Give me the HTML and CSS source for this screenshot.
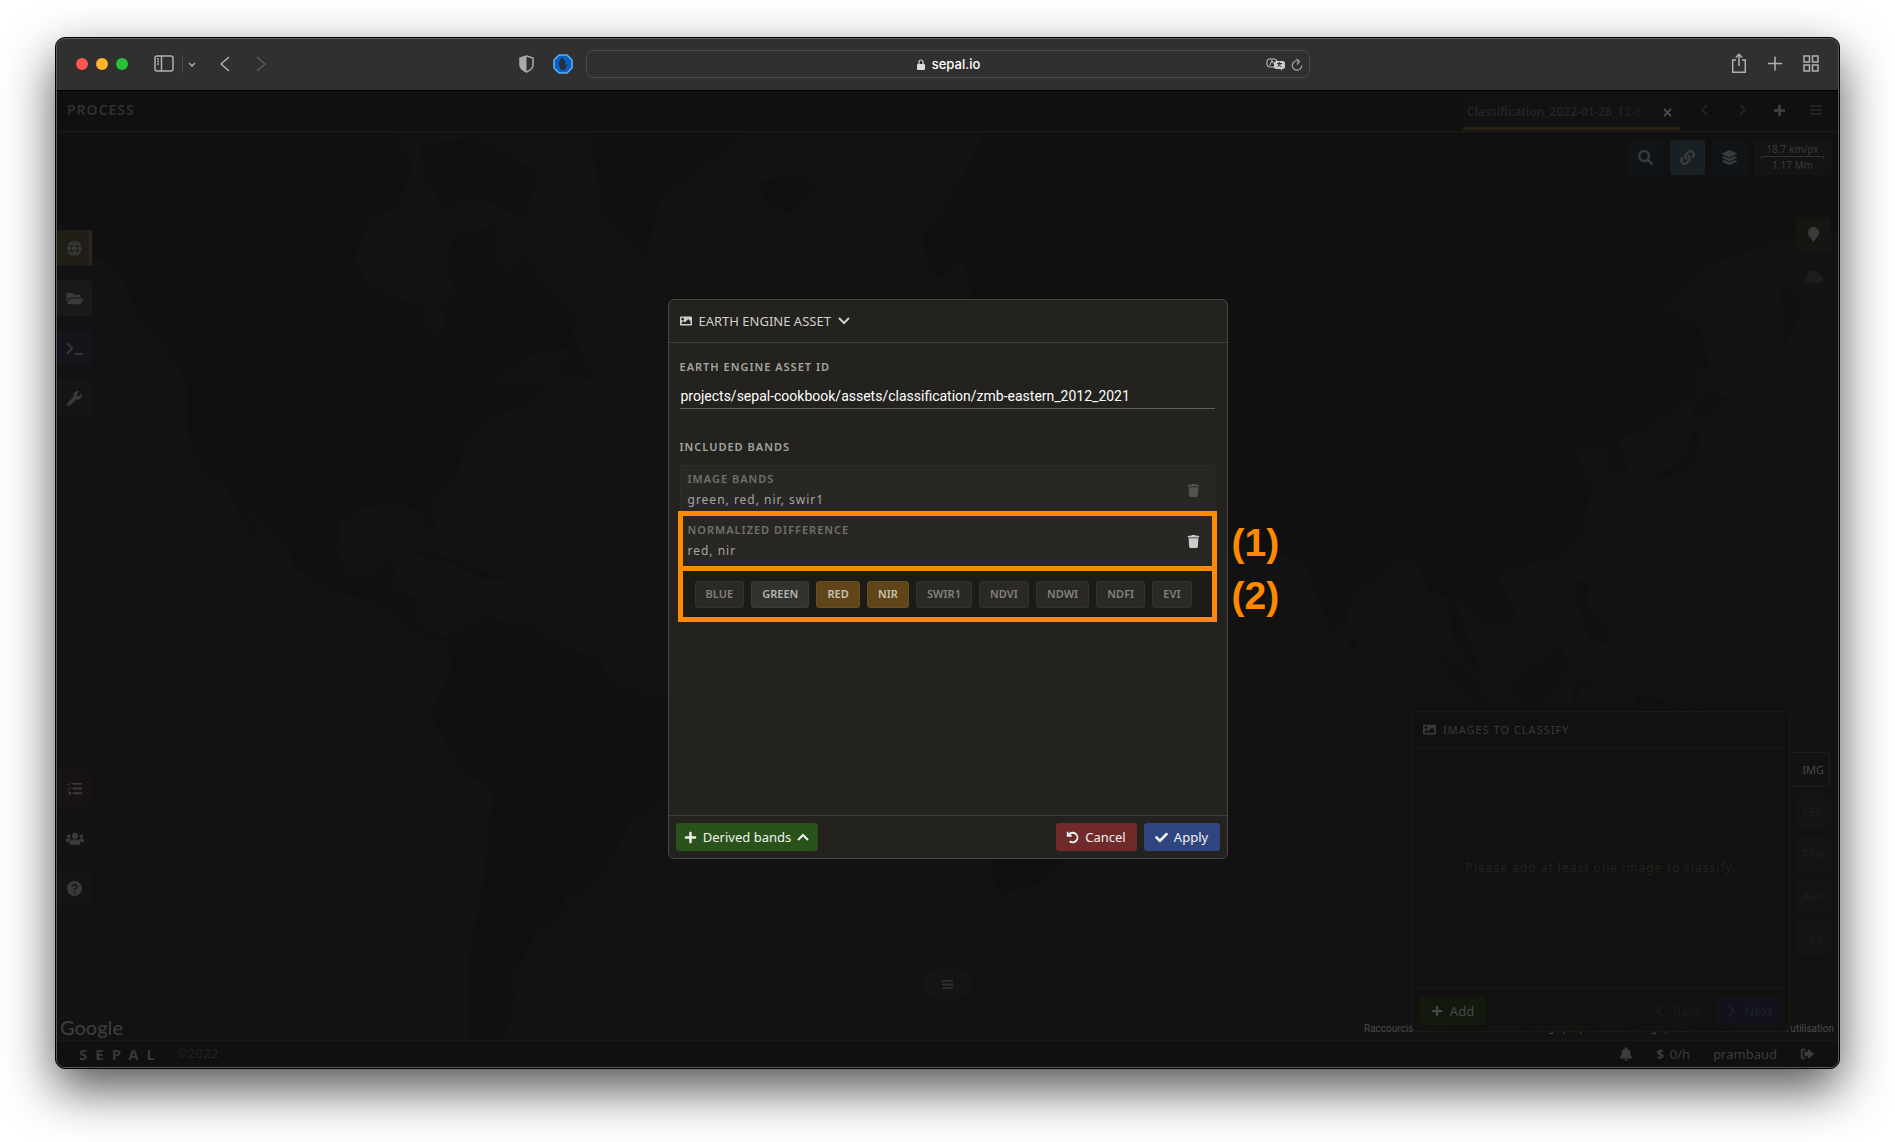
FILE: index.html
```html
<!DOCTYPE html>
<html lang="en">
<head>
<meta charset="utf-8">
<meta name="viewport" content="width=device-width, initial-scale=1">
<title>SEPAL</title>
<link rel="stylesheet" href="styles.css">
</head>
<body>
<svg class="sprite" aria-hidden="true">
  <symbol id="plus" viewBox="0 0 448 512"><path d="M416 208H272V64c0-17.67-14.33-32-32-32h-32c-17.67 0-32 14.33-32 32v144H32c-17.67 0-32 14.33-32 32v32c0 17.67 14.33 32 32 32h144v144c0 17.67 14.33 32 32 32h32c17.67 0 32-14.33 32-32V304h144c17.67 0 32-14.33 32-32v-32c0-17.67-14.33-32-32-32z"/></symbol>
  <symbol id="check" viewBox="0 0 512 512"><path d="M173.898 439.404l-166.4-166.4c-9.997-9.997-9.997-26.206 0-36.204l36.203-36.204c9.997-9.998 26.207-9.998 36.204 0L192 312.69 432.095 72.596c9.997-9.997 26.207-9.997 36.204 0l36.203 36.204c9.997 9.997 9.997 26.206 0 36.204l-294.4 294.401c-9.998 9.997-26.207 9.997-36.204-.001z"/></symbol>
  <symbol id="trash" viewBox="0 0 448 512"><path d="M432 32H312l-9.4-18.7A24 24 0 0 0 281.1 0H166.8a23.72 23.72 0 0 0-21.4 13.3L136 32H16A16 16 0 0 0 0 48v32a16 16 0 0 0 16 16h416a16 16 0 0 0 16-16V48a16 16 0 0 0-16-16zM53.2 467a48 48 0 0 0 47.9 45h245.8a48 48 0 0 0 47.9-45L416 128H32z"/></symbol>
  <symbol id="search" viewBox="0 0 512 512"><path d="M505 442.7L405.3 343c-4.5-4.5-10.6-7-17-7H372c27.6-35.3 44-79.7 44-128C416 93.1 322.9 0 208 0S0 93.1 0 208s93.1 208 208 208c48.3 0 92.7-16.4 128-44v16.3c0 6.4 2.5 12.5 7 17l99.7 99.7c9.4 9.4 24.6 9.4 33.9 0l28.3-28.3c9.4-9.4 9.4-24.6.1-34zM208 336c-70.7 0-128-57.2-128-128 0-70.7 57.2-128 128-128 70.7 0 128 57.2 128 128 0 70.7-57.2 128-128 128z"/></symbol>
  <symbol id="image" viewBox="0 0 512 512"><path d="M464 448H48c-26.51 0-48-21.49-48-48V112c0-26.51 21.49-48 48-48h416c26.51 0 48 21.49 48 48v288c0 26.51-21.49 48-48 48zM112 120c-30.928 0-56 25.072-56 56s25.072 56 56 56 56-25.072 56-56-25.072-56-56-56zM64 384h384V272l-87.515-87.515c-4.686-4.686-12.284-4.686-16.971 0L208 320l-55.515-55.515c-4.686-4.686-12.284-4.686-16.971 0L64 336v48z"/></symbol>
  <symbol id="layers" viewBox="0 0 512 512"><path d="M12.41 148.02l232.94 105.67c6.8 3.09 14.49 3.09 21.29 0l232.94-105.67c16.55-7.51 16.55-32.52 0-40.03L266.65 2.31a25.607 25.607 0 0 0-21.29 0L12.41 107.98c-16.55 7.51-16.55 32.53 0 40.04zm487.18 88.28l-58.09-26.33-161.64 73.27c-7.56 3.43-15.59 5.17-23.86 5.17s-16.29-1.74-23.86-5.17L70.51 209.97l-58.1 26.33c-16.55 7.5-16.55 32.5 0 40l232.94 105.59c6.8 3.08 14.49 3.08 21.29 0L499.59 276.3c16.55-7.5 16.55-32.5 0-40zm0 127.8l-57.87-26.23-161.86 73.37c-7.56 3.43-15.59 5.17-23.86 5.17s-16.29-1.74-23.86-5.17L70.29 337.87 12.41 364.1c-16.55 7.5-16.55 32.5 0 40l232.94 105.59c6.8 3.08 14.49 3.08 21.29 0L499.59 404.1c16.55-7.5 16.55-32.5 0-40z"/></symbol>
  <symbol id="folder" viewBox="0 0 576 512"><path d="M572.694 292.093L500.27 416.248A63.997 63.997 0 0 1 444.989 448H45.025c-18.523 0-30.064-20.093-20.731-36.093l72.424-124.155A64 64 0 0 1 152 256h399.964c18.523 0 30.064 20.093 20.73 36.093zM152 224h328v-48c0-26.51-21.49-48-48-48H272l-64-64H48C21.49 64 0 85.49 0 112v278.046l69.077-118.418C86.214 242.25 117.989 224 152 224z"/></symbol>
  <symbol id="bell" viewBox="0 0 448 512"><path d="M224 512c35.32 0 63.97-28.65 63.97-64H160.03c0 35.35 28.65 64 63.97 64zm215.39-149.71c-19.32-20.76-55.47-51.99-55.47-154.29 0-77.7-54.48-139.9-127.94-155.16V32c0-17.67-14.32-32-31.98-32s-31.98 14.33-31.98 32v20.84C118.56 68.1 64.08 130.3 64.08 208c0 102.3-36.15 133.53-55.47 154.29-6 6.45-8.66 14.16-8.61 21.71.11 16.4 12.98 32 32.1 32h383.8c19.12 0 32-15.6 32.1-32 .05-7.55-2.61-15.27-8.61-21.71z"/></symbol>
  <symbol id="wrench" viewBox="0 0 512 512"><path d="M507.73 109.1c-2.24-9.03-13.54-12.09-20.12-5.51l-74.36 74.36-67.88-11.31-11.31-67.88 74.36-74.36c6.62-6.62 3.43-17.9-5.66-20.16-47.38-11.74-99.55.91-136.58 37.93-39.64 39.64-50.55 97.1-34.05 147.2L18.74 402.76c-24.99 24.99-24.99 65.51 0 90.5 24.99 24.99 65.51 24.99 90.5 0l213.21-213.21c50.12 16.71 107.47 5.68 147.37-34.22 37.07-37.07 49.7-89.32 37.91-136.73zM64 472c-13.25 0-24-10.75-24-24 0-13.26 10.75-24 24-24s24 10.74 24 24c0 13.25-10.75 24-24 24z"/></symbol>
  <symbol id="bars" viewBox="0 0 12 12"><path d="M0 1h12v2H0zM0 5h12v2H0zM0 9h12v2H0z"/></symbol>
  <symbol id="left" viewBox="0 0 12 12"><path class="line" d="M8 1 3 6l5 5"/></symbol>
  <symbol id="right" viewBox="0 0 12 12"><path class="line" d="M4 1l5 5-5 5"/></symbol>
  <symbol id="down" viewBox="0 0 12 12"><path class="line" d="M1 3l5 5 5-5"/></symbol>
  <symbol id="up" viewBox="0 0 12 12"><path class="line" d="M1 9l5-5 5 5"/></symbol>
  <symbol id="undo" viewBox="0 0 16 16"><path d="M1 1v6h6V5H5a4.600 4.600 0 1 1 .4 6.600l-1.700 1.800A7 7 0 1 0 3 3.300V1z"/></symbol>
  <symbol id="link" viewBox="0 0 512 512"><path d="M326.612 185.391c59.747 59.809 58.927 155.698.36 214.59-.11.12-.24.25-.36.37l-67.2 67.2c-59.27 59.27-155.699 59.262-214.96 0-59.27-59.26-59.27-155.7 0-214.96l37.106-37.106c9.84-9.84 26.786-3.3 27.294 10.606.648 17.722 3.826 35.527 9.69 52.721 1.986 5.822.567 12.262-3.783 16.612l-13.087 13.087c-28.026 28.026-28.905 73.66-1.155 101.96 28.024 28.579 74.086 28.749 102.325.51l67.2-67.19c28.191-28.191 28.073-73.757 0-101.83-3.701-3.694-7.429-6.564-10.341-8.569a16.037 16.037 0 0 1-6.947-12.606c-.396-10.567 3.348-21.456 11.698-29.806l21.054-21.055c5.521-5.521 14.182-6.199 20.584-1.731a152.482 152.482 0 0 1 20.522 17.197zM467.547 44.449c-59.261-59.262-155.690-59.270-214.960 0l-67.200 67.200c-.120.120-.250.250-.360.370-58.566 58.892-59.387 154.781.360 214.590a152.454 152.454 0 0 0 20.521 17.196c6.402 4.468 15.064 3.789 20.584-1.731l21.054-21.055c8.350-8.350 12.094-19.239 11.698-29.806a16.037 16.037 0 0 0-6.947-12.606c-2.912-2.005-6.640-4.875-10.341-8.569-28.073-28.073-28.191-73.639 0-101.830l67.200-67.190c28.239-28.239 74.300-28.069 102.325.510 27.750 28.300 26.872 73.934-1.155 101.960l-13.087 13.087c-4.350 4.350-5.769 10.790-3.783 16.612 5.864 17.194 9.042 34.999 9.690 52.721.509 13.906 17.454 20.446 27.294 10.606l37.106-37.106c59.271-59.259 59.271-155.699.001-214.959z"/></symbol>
  <symbol id="globe" viewBox="0 0 16 16"><circle cx="8" cy="8" r="8"/><path class="cut" d="M0 5.500h16M0 10.500h16M8 0C3.500 3 3.500 13 8 16M8 0c4.500 3 4.500 13 0 16"/></symbol>
  <symbol id="terminal" viewBox="0 0 20 16"><path class="line" d="M1 2l6 6-6 6M10 14h9"/></symbol>
  <symbol id="tasks" viewBox="0 0 16 16"><path d="M6 2h10v2H6zM6 7h10v2H6zM6 12h10v2H6zM1.500 11.500h3v3h-3z"/><path class="thin" d="M0 3l1.500 1.500L4.500 1M0 8l1.500 1.500L4.500 6"/></symbol>
  <symbol id="users" viewBox="0 0 20 16"><circle cx="10" cy="5" r="3.500"/><circle cx="3" cy="5.500" r="2"/><circle cx="17" cy="5.500" r="2"/><path d="M4 15v-2a4 4 0 0 1 4-4h4a4 4 0 0 1 4 4v2zM0 12v-2a2 2 0 0 1 2-2h2.500l1 1A5 5 0 0 0 3.500 12zM20 12v-2a2 2 0 0 0-2-2h-2.500l-1 1a5 5 0 0 1 2 3z"/></symbol>
  <symbol id="help" viewBox="0 0 16 16"><circle cx="8" cy="8" r="8"/><path class="cut wide" d="M5.500 6.200C6 3.200 10.500 3.500 10.500 6c0 1.700-2.500 1.700-2.500 3.600M8 11v2"/></symbol>
  <symbol id="pin" viewBox="0 0 12 16"><path d="M6 0a6 6 0 0 0-6 6c0 3 3 5 6 10 3-5 6-7 6-10a6 6 0 0 0-6-6z"/></symbol>
  <symbol id="cloud" viewBox="0 0 20 14"><path d="M4.500 14A4.500 4.500 0 0 1 3 5.300 5.500 5.500 0 0 1 13 2.500 4 4 0 0 1 17 6a4 4 0 0 1-1 8z"/><path class="cut wide" d="M9.500 4v6M6.500 8l3 3 3-3"/></symbol>
  <symbol id="logout" viewBox="0 0 16 14"><path d="M6 1v2H3.500Q3 3 3 4v6q0 1 .5 1H6v2H3Q1 13 1 11V3Q1 1 3 1zM9 1l7 6-7 6V9.500H5v-5h4z"/></symbol>
</svg>

<div class="window">
  <header class="toolbar">
    <div class="bar-left">
      <div class="lights"><i class="red"></i><i class="amber"></i><i class="green"></i></div>
      <svg class="sidebar-icon" width="20" height="17" viewBox="0 0 20 17"><rect x="1" y="1" width="18" height="15" rx="2"/><path d="M7.500 1v15M3 4h2M3 6.500h2M3 9h2"/></svg>
      <svg class="split" width="15" height="18" viewBox="0 0 15 18"><path class="rule" d="M.5 0v18"/><path d="M7 8l3 3 3-3"/></svg>
      <svg class="nav-arrow" width="10" height="16" viewBox="0 0 10 16"><path d="M9 1 1 8l8 7"/></svg>
      <svg class="nav-arrow off" width="10" height="16" viewBox="0 0 10 16"><path d="M1 1l8 7-8 7"/></svg>
    </div>
    <div class="bar-center">
      <svg width="15" height="18" viewBox="0 0 15 18"><path d="M7.500 1 14 3v7c0 3-3 5.500-6.500 7C4 15.500 1 13 1 10V3z" fill="none" stroke="#a9a9a9" stroke-width="1.500"/><path d="M7.500 1v16C4 15.500 1 13 1 10V3z" fill="#a9a9a9"/></svg>
      <svg class="stop" width="20" height="20" viewBox="0 0 20 20"><path d="M6 1h8l5 5v8l-5 5H6l-5-5V6z" fill="#0a5fc4" stroke="#5ab4f5" stroke-width="1.500"/><path d="M6 11V7.500h1V10V5h1.300v4V4h1.300v5V4.500h1.300V10V6h1.200v6l1.400-2 1 .5-2.500 5.500H8z" fill="#2b3038"/></svg>
      <div class="address">
        <svg width="8" height="11" viewBox="0 0 8 11"><rect y="5" width="8" height="6" rx="1" fill="#ddd"/><path d="M2 5V3a2 2 0 0 1 4 0v2" fill="none" stroke="#ddd" stroke-width="1.200"/></svg>
        <span>sepal.io</span>
        <div class="page-actions">
          <svg width="20" height="13" viewBox="0 0 20 13"><rect x="1" y="1" width="10" height="8" rx="2.500" fill="none" stroke="#ccc"/><path d="M3.500 7.500 6 2.500l1.500 3" fill="none" stroke="#ccc"/><rect x="8" y="3" width="11" height="8" rx="2.500" fill="#ccc"/><path d="M14 10l2 3v-3z" fill="#ccc"/><path d="M11 5.500h5M13.500 4v1.500M11.500 9l3.500-3.500M12 6l3.500 3" stroke="#333" fill="none"/></svg>
          <svg width="12" height="13" viewBox="0 0 12 13"><path d="M8.500 3.500A4.700 4.700 0 1 0 10.700 7.500M5.500 1l3 2.500-2.500 3" fill="none" stroke="#a5a5a5" stroke-width="1.200"/></svg>
        </div>
      </div>
    </div>
    <div class="bar-right">
      <svg width="16" height="21" viewBox="0 0 16 21"><path d="M5 7H1.700v12.300h12.600V7H11M8 13V1.500M4.800 4.500 8 1.300l3.200 3.200"/></svg>
      <svg width="14" height="15" viewBox="0 0 14 15"><path d="M7 .5v14M0 7.500h14"/></svg>
      <svg width="16" height="17" viewBox="0 0 16 17"><path d="M1 1h5.500v6H1zM9.500 1H15v6H9.500zM1 10h5.500v6H1zM9.500 10H15v6H9.500z"/></svg>
    </div>
  </header>

  <div class="app">
    <header class="process">
      <h1>PROCESS</h1>
      <div class="tab"><span>Classification_2022-01-28_12-5</span><button aria-label="Close tab"><svg width="9" height="9" viewBox="0 0 10 10"><path d="M1 1l8 8M9 1L1 9"/></svg></button></div>
      <div class="tab-tools">
        <button class="faint" aria-label="Previous"><svg class="i12"><use href="#left"/></svg></button>
        <button class="faint" aria-label="Next"><svg class="i12"><use href="#right"/></svg></button>
        <button class="bright" aria-label="Add"><svg class="i13"><use href="#plus"/></svg></button>
        <button class="faint" aria-label="Menu"><svg class="i12"><use href="#bars"/></svg></button>
      </div>
    </header>

    <main class="stage">
      <svg class="map" viewBox="0 0 1781 908" preserveAspectRatio="none" aria-hidden="true">
        <g transform="scale(.395 .582)">
          <path d="M0 0H850L900 60 860 130 790 150 750 220 790 265 920 300 940 345 965 362 985 330 975 300 1010 270 990 240 1000 180 1110 160 1115 220 1150 240 1185 210 1230 265 1310 320 1300 370 1190 385 1100 430 1250 430 1170 475 1100 490 1030 540 1015 585 945 630 962 690 940 690 920 650 860 640 770 645 715 670 710 720 735 760 800 765 820 740 860 740 845 790 910 800 910 850 985 870 1090 835 1200 850 1290 890 1370 900 1395 945 1548 980V1140L1450 1190 1400 1250 1340 1310 1280 1310 1295 1340 1210 1380 1180 1420 1140 1450 1160 1485 1130 1568H1040V1430L1080 1290 1105 1130 1030 1100 945 1000 1000 920 990 875 940 870 880 850 860 825 780 800 720 795 600 750 590 720 460 630 530 715 470 670 430 610 370 580 330 520V430L270 370 200 310 160 240 100 215 0 200z"/>
          <path d="M1350 0 1380 140 1490 212 1530 110 1600 80 1750 0zM900 725 940 718 1080 755 1160 770 1080 768 1000 740zM920 20 1060 10 1220 70 1180 150 1060 110 980 130 930 80zM1265 415 1310 355 1355 425z"/>
        </g>
        <g transform="translate(603) scale(.383 .582)">
          <path d="M850 0 760 110 685 180 700 240 740 250 790 215 820 290H1568V0zM260 85 370 75 405 100 340 140 275 120zM865 1240 880 1310 1000 1290 1075 1240z"/>
        </g>
        <g transform="translate(1163) scale(.395 .582)">
          <path d="M-50 0H1568V170L1440 180 1230 230 1120 305 1210 330 1205 450 1100 500 1010 530 1035 590 990 585 980 550 890 540 940 610 920 680 860 730 740 750 700 760 750 830 700 855 590 800 665 935 590 880 580 800 530 790 490 730 440 740 330 800 320 840 285 865 215 740 140 720-50 700z"/>
          <path d="M1210 320 1240 410 1215 415zM1190 490 1220 450 1300 455 1220 490zM1200 505 1215 530 1195 580 1060 605 1120 585 1180 560zM740 940 860 885 880 910 850 960 800 985 750 975zM545 900 620 920 700 1000 650 990zM900 770 935 775 925 810 980 850 990 880 940 875 905 810zM320 860 350 880 330 892zM890 950 950 940 910 960 900 995zM1050 965 1270 1000H1050zM1420 260 1480 290 1430 365z"/>
        </g>
      </svg>

      <nav class="side" aria-label="Sections">
        <div>
          <button class="globe" aria-label="Process"><svg class="i15"><use href="#globe"/></svg></button>
          <button class="folder" aria-label="Files"><svg class="i18"><use href="#folder"/></svg></button>
          <button class="terminal" aria-label="Terminal"><svg class="i18"><use href="#terminal"/></svg></button>
          <button class="wrench" aria-label="Apps"><svg class="i15"><use href="#wrench"/></svg></button>
        </div>
        <div>
          <button class="tasks" aria-label="Tasks"><svg class="i15"><use href="#tasks"/></svg></button>
          <button class="users" aria-label="Users"><svg class="i18"><use href="#users"/></svg></button>
          <button class="help" aria-label="Help"><svg class="i15"><use href="#help"/></svg></button>
        </div>
      </nav>

      <div class="tools">
        <div class="tool-row">
          <button class="blue" aria-label="Search"><svg class="i15"><use href="#search"/></svg></button>
          <button class="blue on" aria-label="Link"><svg class="i15"><use href="#link"/></svg></button>
          <button class="blue" aria-label="Layers"><svg class="i15"><use href="#layers"/></svg></button>
          <div class="scale"><span>18.7 km/px</span><i></i><span>1.17 Mm</span></div>
        </div>
        <button class="olive" aria-label="Marker"><svg class="i15"><use href="#pin"/></svg></button>
        <button class="olive dim" aria-label="Retrieve"><svg class="i18"><use href="#cloud"/></svg></button>
      </div>

      <div class="google">Google</div>
      <div class="attribution"><span>Raccourcis clavier</span><span>Données cartographiques ©2022 Google, INEGI</span><span>Conditions d'utilisation</span></div>
      <button class="pill" aria-label="Expand"><svg class="i11"><use href="#bars"/></svg></button>

      <section class="classify">
        <div class="card">
          <h2><svg class="i13"><use href="#image"/></svg>IMAGES TO CLASSIFY</h2>
          <p>Please add at least one image to classify.</p>
          <footer>
            <button class="add"><svg class="i12"><use href="#plus"/></svg>Add</button>
            <button class="back"><svg class="i12"><use href="#left"/></svg>Back</button>
            <button class="next"><svg class="i12"><use href="#right"/></svg>Next</button>
          </footer>
        </div>
        <div class="steps">
          <button class="current">IMG</button><button>LEG</button><button>TRN</button><button>AUX</button><button>CLS</button>
        </div>
      </section>
    </main>

    <footer class="status">
      <strong>SEPAL</strong><span class="year">©2022</span>
      <div class="account">
        <svg class="i14"><use href="#bell"/></svg>
        <span class="budget"><b>$</b>0/h</span>
        <span>prambaud</span>
        <svg class="i14"><use href="#logout"/></svg>
      </div>
    </footer>

    <div class="overlay">
      <form class="modal">
        <h2><svg class="i12"><use href="#image"/></svg>EARTH ENGINE ASSET<svg class="i12"><use href="#down"/></svg></h2>
        <div class="body">
          <label class="caption" for="asset">EARTH ENGINE ASSET ID</label>
          <input id="asset" type="text" value="projects/sepal-cookbook/assets/classification/zmb-eastern_2012_2021">
          <div class="caption included">INCLUDED BANDS</div>
          <div class="band">
            <div><h3>IMAGE BANDS</h3><p>green, red, nir, swir1</p></div>
            <button type="button" class="trash off" aria-label="Remove image bands"><svg class="i13"><use href="#trash"/></svg></button>
          </div>
          <div class="band">
            <div><h3>NORMALIZED DIFFERENCE</h3><p>red, nir</p></div>
            <button type="button" class="trash" aria-label="Remove normalized difference"><svg class="i13"><use href="#trash"/></svg></button>
            <div class="mark"><span>(1)</span></div>
          </div>
          <div class="chips">
            <button type="button">BLUE</button><button type="button" class="light">GREEN</button><button type="button" class="picked">RED</button><button type="button" class="picked">NIR</button><button type="button">SWIR1</button><button type="button">NDVI</button><button type="button">NDWI</button><button type="button">NDFI</button><button type="button">EVI</button>
            <div class="mark"><span>(2)</span></div>
          </div>
        </div>
        <footer>
          <button type="button" class="derived"><svg class="i13"><use href="#plus"/></svg>Derived bands<svg class="i12"><use href="#up"/></svg></button>
          <button type="button" class="cancel"><svg class="i13"><use href="#undo"/></svg>Cancel</button>
          <button type="button" class="apply"><svg class="i13"><use href="#check"/></svg>Apply</button>
        </footer>
      </form>
    </div>
  </div>
</div>
</body>
</html>
```
FILE: styles.css
```css
* { box-sizing: border-box; }
body {
  margin: 0;
  min-height: 100vh;
  padding: 37px 55px 73px;
  display: flex;
  background: #fff;
  color: #ccc;
  font: 13px/18px "Noto Sans", "Open Sans", sans-serif;
}
h1, h2, h3, p { margin: 0; font-size: inherit; font-weight: 400; }
button { border: 0; padding: 0; background: none; color: inherit; font: inherit; display: flex; align-items: center; justify-content: center; }
svg { display: block; flex: none; fill: currentColor; }
.sprite { position: absolute; width: 0; height: 0; }
.line { fill: none; stroke: currentColor; stroke-width: 2; }
.thin { fill: none; stroke: currentColor; stroke-width: 1; }
.cut { fill: none; stroke: #1c1b17; stroke-width: 1; }
.wide { stroke-width: 2; }
.i11 { width: 11px; height: 11px; }
.i12 { width: 12px; height: 12px; }
.i13 { width: 13px; height: 13px; }
.i14 { width: 14px; height: 14px; }
.i15 { width: 15px; height: 15px; }
.i18 { width: 18px; height: 15px; }

/* Browser window */
.window {
  flex: 1;
  min-width: 0;
  display: flex;
  flex-direction: column;
  border: 1px solid #000;
  border-radius: 10px;
  overflow: clip;
  outline: 1px solid #5a5a5a;
  outline-offset: -2px;
  padding: 1px;
  background: #111;
  box-shadow: 0 20px 50px rgba(0, 0, 0, .68);
}
.toolbar {
  height: 52px;
  display: grid;
  grid-template-columns: 1fr auto 1fr;
  align-items: center;
  padding-bottom: 2px;
  background: #303030;
  border-bottom: 1px solid #000;
  border-radius: 8px 8px 0 0;
}
.toolbar svg { fill: none; }
.bar-left { display: flex; align-items: center; padding-left: 19px; color: #b0b0b0; }
.bar-left svg, .bar-right svg { stroke: #b0b0b0; stroke-width: 1.5; }
.lights { display: flex; gap: 8px; }
.lights i { width: 12px; height: 12px; border-radius: 50%; }
.red { background: #ff5650; }
.amber { background: #ffb429; }
.green { background: #28c138; }
.sidebar-icon { margin-left: 26px; }
.split { margin: 0 23px 0 8px; }
.bar-left .rule { stroke: #484848; stroke-width: 1; }
.nav-arrow { margin-right: 26px; }
.bar-left .off { stroke: #5b5b5b; }
.bar-center { display: flex; align-items: center; gap: 19px; margin-right: 66px; }
.stop { margin-right: -6px; }
.address {
  width: 724px;
  height: 28px;
  border: 1px solid #4a4a4a;
  border-radius: 7px;
  padding: 1px 6px 0 22px;
  display: grid;
  grid-template-columns: 1fr auto 1fr;
  align-items: center;
  column-gap: 7px;
  color: #fff;
  font: 500 13px/18px Inter, sans-serif;
}
.address > svg { justify-self: end; }
.page-actions { display: flex; justify-content: flex-end; gap: 5px; }
.bar-right { display: flex; align-items: center; justify-content: flex-end; gap: 21px; padding-right: 19px; }

/* Application */
.app { position: relative; flex: 1; display: flex; flex-direction: column; background: #101010; border-radius: 0 0 8px 8px; overflow: clip; }
.process { height: 41px; display: flex; align-items: center; border-bottom: 1px solid #1b1b1b; padding-left: 10px; }
.process h1 { flex: 1; padding-bottom: 2px; font-size: 14px; font-weight: 600; color: #303030; letter-spacing: 1px; }
.tab {
  width: 217px;
  height: 33px;
  align-self: flex-end;
  display: flex;
  align-items: center;
  justify-content: space-between;
  padding: 0 8px 0 4px;
  margin-bottom: 1px;
  background: #121212;
  border-bottom: 3px solid #2b2112;
  border-radius: 4px 4px 0 0;
  font-size: 12px;
  font-weight: 600;
  color: #242424;
}
.tab span { flex: 1; white-space: nowrap; mask-image: linear-gradient(90deg, #000 75%, transparent); }
.tab svg { stroke: #505050; stroke-width: 2; }
.tab-tools { display: flex; gap: 13px; padding: 0 10px 2px 13px; color: #444; }
.tab-tools button { width: 24px; height: 24px; }
.tab-tools .faint { color: #232323; }

.stage { flex: 1; display: grid; grid-template: minmax(0, 1fr) / minmax(0, 1fr); background: #121212; color: #3a3a3a; }
.stage > * { grid-area: 1 / 1; }
.map { width: 100%; height: 100%; fill: #101010; }
.side { justify-self: start; display: flex; flex-direction: column; justify-content: space-between; padding: 98px 0 134px; }
.side div { display: grid; gap: 14px; }
.side button { width: 35px; height: 36px; border-radius: 0 3px 3px 0; }
.side .globe { background: #211e17; box-shadow: inset -3px 0 #2b261c; }
.side .folder { background: #191919; }
.side .terminal { background: #13151a; }
.side .wrench { background: #171417; }
.side .tasks { background: #171312; }
.side .users { background: #121412; }
.side .help { background: #141412; }

.tools { place-self: start end; display: flex; flex-direction: column; align-items: flex-end; gap: 7px; padding: 8px 7px; }
.tool-row { display: flex; gap: 7px; margin-bottom: 35px; }
.tools button { width: 35px; height: 35px; border-radius: 2px; }
.blue { background: #111416; }
.blue.on { background: #182024; }
.olive { background: #161512; }
.olive.dim { background: #131312; color: #1e1e1e; }
.scale { width: 77px; height: 35px; background: #141413; border-radius: 2px; display: grid; justify-items: center; align-content: center; font-size: 10px; line-height: 13px; }
.scale i { width: 63px; height: 3px; border: 1px solid #333; border-bottom: 0; }

.google { place-self: end start; padding-left: 3px; color: #3c3c3c; font: 500 20px/26px Lato, sans-serif; }
.attribution { place-self: end; width: 474px; padding-right: 4px; display: flex; justify-content: space-between; font: 10px/23px Roboto, sans-serif; color: #4a4a4a; white-space: nowrap; }
.pill { place-self: end center; width: 51px; height: 28px; margin-bottom: 42px; border-radius: 14px; background: #141412; color: #303030; }

.classify { place-self: end; display: flex; margin: 0 8px 8px 0; }
.card { width: 378px; height: 321px; display: flex; flex-direction: column; background: rgba(18, 18, 16, .95); border: 1px solid #1a1a18; border-radius: 6px; }
.card h2 { height: 36px; display: flex; align-items: center; gap: 7px; padding-left: 10px; border-bottom: 1px solid #1a1a18; font-size: 11px; letter-spacing: 1px; }
.card p { flex: 1; display: grid; place-items: center; color: #222220; letter-spacing: 1px; font-size: 12px; }
.card footer { height: 43px; display: flex; align-items: flex-start; gap: 6px; padding: 8px 7px; border-top: 1px solid #1a1a18; }
.card button { height: 28px; gap: 7px; border-radius: 3px; font-size: 13px; }
.add { width: 65px; background: #121a10; color: #484848; }
.back { width: 65px; margin-left: auto; color: #1b1b1a; }
.next { width: 66px; background: #12131a; color: #1e2026; }
.steps { display: grid; align-content: start; gap: 7px; padding-top: 41px; }
.steps button { width: 34px; height: 35px; margin-left: 6px; background: #141412; border-radius: 2px; color: #1e1e1d; font-size: 11px; }
.steps .current { width: 40px; margin-left: 0; padding-right: 5px; justify-content: flex-end; background: #121210; border: 1px solid #1c1c1b; border-left: 0; color: #484848; }

.status { height: 27px; display: flex; align-items: center; border-top: 1px solid #171717; padding: 0 24px 0 22px; color: #3c3c3c; font-size: 13px; }
.status strong { font-size: 15px; letter-spacing: 8px; color: #383838; }
.year { margin-left: 14px; color: #242424; font-size: 12px; letter-spacing: 1px; }
.account { margin-left: auto; display: flex; align-items: center; gap: 23px; }
.budget { display: flex; gap: 6px; }

/* Asset dialog */
.overlay { position: absolute; inset: 0; display: grid; place-items: center; }
.modal { width: 560px; height: 560px; display: flex; flex-direction: column; background: #23221e; border: 1px solid #454542; border-radius: 6px; }
.modal h2 { height: 43px; display: flex; align-items: center; gap: 7px; padding-left: 11px; border-bottom: 1px solid #3e3e3b; color: #d0d0ce; }
.modal .body { flex: 1; padding: 16px 12px 0 11px; display: flex; flex-direction: column; }
.caption { font-size: 11px; font-weight: 600; line-height: 16px; letter-spacing: 1px; color: #a4a4a1; }
.modal input { height: 26px; margin-top: 8px; padding: 0 1px; border: 0; border-bottom: 1px solid #5f5f5c; background: none; color: #fff; font: 14px/20px Roboto, sans-serif; outline: 0; border-radius: 0; }
.included { margin: 30px 0 10px; }
.band { position: relative; height: 51px; display: flex; align-items: center; justify-content: space-between; padding: 0 14px 0 7px; background: #282723; border: 1px solid #2d2c28; }
.band h3 { font-size: 11px; font-weight: 600; line-height: 18px; letter-spacing: 1px; color: #70706d; }
.band p { font-size: 12px; line-height: 24px; letter-spacing: 1px; color: #a6a6a3; }
.trash { color: #ccc; }
.trash.off { color: #535350; }
.chips { position: relative; height: 51px; display: flex; align-items: center; gap: 7px; padding: 3px 23px 0 15px; background: #1c1b17; }
.chips button { flex: 1 1 auto; height: 27px; border: 1px solid #33322e; border-radius: 3px; background: #2a2925; color: #82827e; font-size: 11px; font-weight: 600; }
.chips .light { background: #33322f; border-color: #3b3a36; color: #b4b4b0; }
.chips .picked { background: #5f4518; border-color: #6b4e1e; color: #c9c2b4; }
/* numbered callouts over the list */
.mark { position: absolute; border: 5px solid #ff8a00; pointer-events: none; }
.band .mark { inset: -6px -3px -5px; }
.chips .mark { inset: -1px -2px -4px; }
.mark span { position: absolute; left: 100%; top: 50%; translate: 0 -50%; margin-left: 20px; padding-top: 4px; color: #ff8a00; font: 700 39px/44px "Liberation Sans", Arial, sans-serif; }
.modal footer { height: 43px; display: flex; align-items: center; gap: 7px; padding: 0 7px; border-top: 1px solid #3e3e3b; color: #f2f2f2; }
.modal footer button { height: 28px; border-radius: 3px; gap: 6px; font-size: 13px; }
.modal footer .derived { width: 142px; background: #29531b; margin-right: auto; }
.modal footer .cancel { width: 81px; background: #712a2a; }
.modal footer .apply { width: 76px; background: #2f4580; }
```
